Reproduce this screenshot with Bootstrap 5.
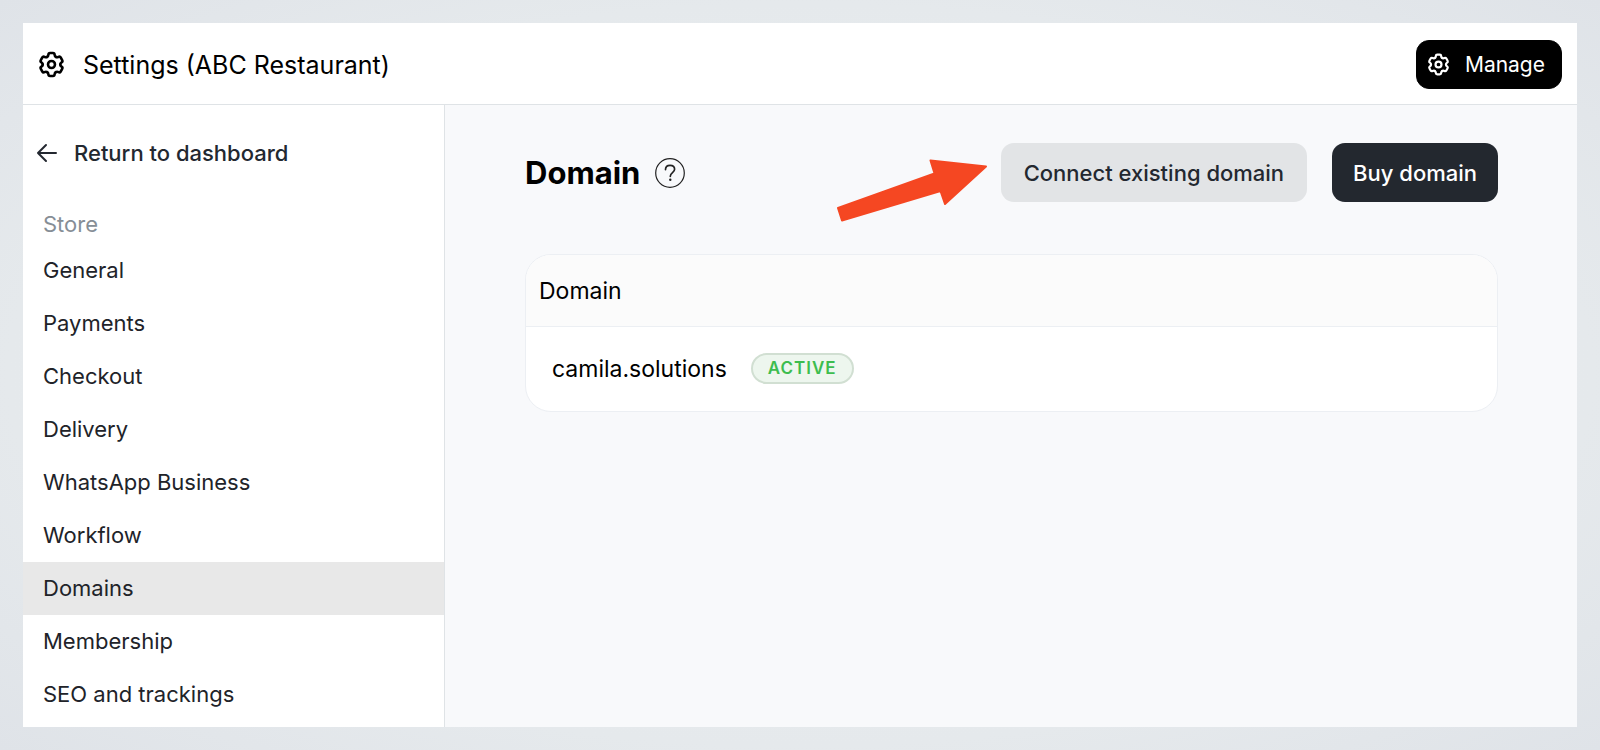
<!DOCTYPE html>
<html lang="en">
<head>
<meta charset="utf-8">
<meta name="viewport" content="width=device-width, initial-scale=1">
<title>Settings – Domains</title>
<link href="https://cdn.jsdelivr.net/npm/bootstrap@5.3.0/dist/css/bootstrap.min.css" rel="stylesheet">
<style>
  body {
    font-family: Inter, "Liberation Sans", sans-serif;
    color: #000;
    background: radial-gradient(ellipse at center, #e8ecee 40%, #e5e9ec 70%, #dfe3e8 100%);
  }
  .page { min-height: 100vh; padding: 23px; }
  .topbar { height: 82px; padding: 2px 15px 0; border-bottom: 1px solid #dfe3e6; }
  .topbar-brand { gap: 18px; }
  .topbar-title { font-size: 25px; line-height: 32px; font-weight: 400; }
  .btn-manage {
    --bs-btn-color: #fff; --bs-btn-bg: #000; --bs-btn-border-color: #000;
    --bs-btn-hover-color: #fff; --bs-btn-hover-bg: #222;
    height: 49px; padding: 0 16px 0 10px; border-radius: 13px; font-size: 21px; line-height: 28px; gap: 15px;
  }
  .sidebar { width: 422px; border-right: 1px solid #dfe3e6; }
  .back-link { color: #232830; font-size: 22px; line-height: 30px; font-weight: 500; padding: 33px 13px 0; gap: 16px; }
  .side-heading { color: #868e96; font-size: 22px; line-height: 30px; padding: 0 20px; margin: 41px 0 5px; font-weight: 400; }
  .side-link { color: #212329; font-size: 22px; line-height: 29px; padding: 12px 20px; border-radius: 0; }
  .side-link:hover { color: #000; }
  .side-link.active { background: #e8e8e8; }
  .main-area { background: #f8f9fb; padding: 38px 79px 38px 80px; }
  .title-group { gap: 10px; }
  .page-title { font-size: 31px; line-height: 40px; font-weight: 700; }
  .btn-help { color: #222; }
  .btn-action { height: 59px; border-radius: 13px; font-size: 22px; line-height: 30px; font-weight: 500; border: 0; }
  .btn-connect { --bs-btn-color: #232830; --bs-btn-bg: #e2e4e6; --bs-btn-hover-bg: #d6d9db; padding: 0 23px; }
  .btn-buy { --bs-btn-color: #fff; --bs-btn-bg: #23282f; --bs-btn-hover-color: #fff; --bs-btn-hover-bg: #343a42; padding: 0 21px; }
  .actions { gap: 25px; }
  .pointer { right: calc(100% + 14px); top: 16px; }
  .domain-card { margin-top: 52px; border: 1px solid #eceff3; border-radius: 26px; background: #fff; }
  .domain-card th { height: 71px; padding: 2px 13px 0; background: #fbfbfb; border-bottom: 1px solid #eceff3; font-size: 23px; line-height: 32px; font-weight: 400; }
  .domain-card td { height: 85px; padding: 0 26px; font-size: 23px; line-height: 32px; }
  .domain-line { gap: 24px; }
  .status-pill { height: 31px; padding: 0 15px; border: 2px solid #d1dfd2; background: #edf6ee; color: #3dbd4f; font-size: 17px; line-height: 27px; font-weight: 600; letter-spacing: 1px; }
</style>
</head>
<body>
<svg class="position-absolute" width="0" height="0" xmlns="http://www.w3.org/2000/svg" aria-hidden="true">
  <defs>
    <path id="tooth" d="M-3.900-6.750C-3-7.270-2.800-7.700-2.800-8.700Q-2.700-10.200-1.300-10.200H1.300Q2.700-10.200 2.800-8.700C2.800-7.700 3-7.270 3.900-6.750"/>
  </defs>
  <symbol id="cog" viewBox="-12 -12 24 24" fill="none" stroke="currentColor" stroke-width="2.300" stroke-linecap="round" stroke-linejoin="round">
    <use href="#tooth"/>
    <use href="#tooth" transform="rotate(60)"/>
    <use href="#tooth" transform="rotate(120)"/>
    <use href="#tooth" transform="rotate(180)"/>
    <use href="#tooth" transform="rotate(240)"/>
    <use href="#tooth" transform="rotate(300)"/>
    <circle r="3.100"/>
  </symbol>
</svg>
<div class="page d-flex flex-column">
  <header class="topbar bg-white d-flex align-items-center justify-content-between">
    <div class="topbar-brand d-flex align-items-center">
      <svg width="27" height="27" aria-hidden="true"><use href="#cog"/></svg>
      <h1 class="topbar-title mb-0">Settings (ABC Restaurant)</h1>
    </div>
    <button type="button" class="btn btn-manage d-flex align-items-center">
      <svg width="23" height="23" aria-hidden="true"><use href="#cog"/></svg>
      Manage
    </button>
  </header>
  <div class="d-flex flex-grow-1">
    <aside class="sidebar bg-white flex-shrink-0">
      <a href="#" class="back-link d-flex align-items-center text-decoration-none">
        <svg width="22" height="20" viewBox="0 0 22 20" fill="none" stroke="currentColor" stroke-width="2" stroke-linecap="round" stroke-linejoin="round" aria-hidden="true"><path d="M20 10H2M10 2 2 10l8 8"/></svg>
        Return to dashboard
      </a>
      <h2 class="side-heading">Store</h2>
      <nav class="nav flex-column" aria-label="Store settings">
        <a class="nav-link side-link" href="#">General</a>
        <a class="nav-link side-link" href="#">Payments</a>
        <a class="nav-link side-link" href="#">Checkout</a>
        <a class="nav-link side-link" href="#">Delivery</a>
        <a class="nav-link side-link" href="#">WhatsApp Business</a>
        <a class="nav-link side-link" href="#">Workflow</a>
        <a class="nav-link side-link active" href="#" aria-current="page">Domains</a>
        <a class="nav-link side-link" href="#">Membership</a>
        <a class="nav-link side-link" href="#">SEO and trackings</a>
      </nav>
    </aside>
    <main class="main-area flex-grow-1">
      <div class="d-flex align-items-center justify-content-between">
        <div class="title-group d-flex align-items-center">
          <h2 class="page-title mb-0">Domain</h2>
          <button type="button" class="btn btn-help border-0 p-1 d-flex" aria-label="Help">
            <svg width="32" height="32" viewBox="0 0 32 32" fill="none" stroke="currentColor" aria-hidden="true"><circle cx="16" cy="16" r="14.300" stroke-width="1.200"/><path d="M11.500 12.600c0-2.700 1.900-4.300 4.600-4.300 2.600 0 4.500 1.600 4.500 4 0 3.400-4.300 3.300-4.300 7" stroke-width="1.700" stroke-linecap="round"/><circle cx="16.300" cy="22.700" r="1.200" fill="currentColor" stroke="none"/></svg>
          </button>
        </div>
        <div class="actions d-flex position-relative">
          <svg class="pointer position-absolute" width="150" height="63" viewBox="0 0 150 63" fill="#f54722" stroke="#f54722" stroke-width="2" stroke-linejoin="round" aria-hidden="true"><path d="M1 49 97.500 14.500 93.500 1.500 149 7.500 108 45 103.500 32 5 61.500z"/></svg>
          <button type="button" class="btn btn-action btn-connect">Connect existing domain</button>
          <button type="button" class="btn btn-action btn-buy">Buy domain</button>
        </div>
      </div>
      <div class="domain-card overflow-hidden">
        <table class="w-100">
          <thead><tr><th scope="col">Domain</th></tr></thead>
          <tbody><tr><td>
            <div class="domain-line d-flex align-items-center">camila.solutions <span class="status-pill rounded-pill">ACTIVE</span></div>
          </td></tr></tbody>
        </table>
      </div>
    </main>
  </div>
</div>
<script src="https://cdn.jsdelivr.net/npm/bootstrap@5.3.0/dist/js/bootstrap.bundle.min.js"></script>
</body>
</html>
